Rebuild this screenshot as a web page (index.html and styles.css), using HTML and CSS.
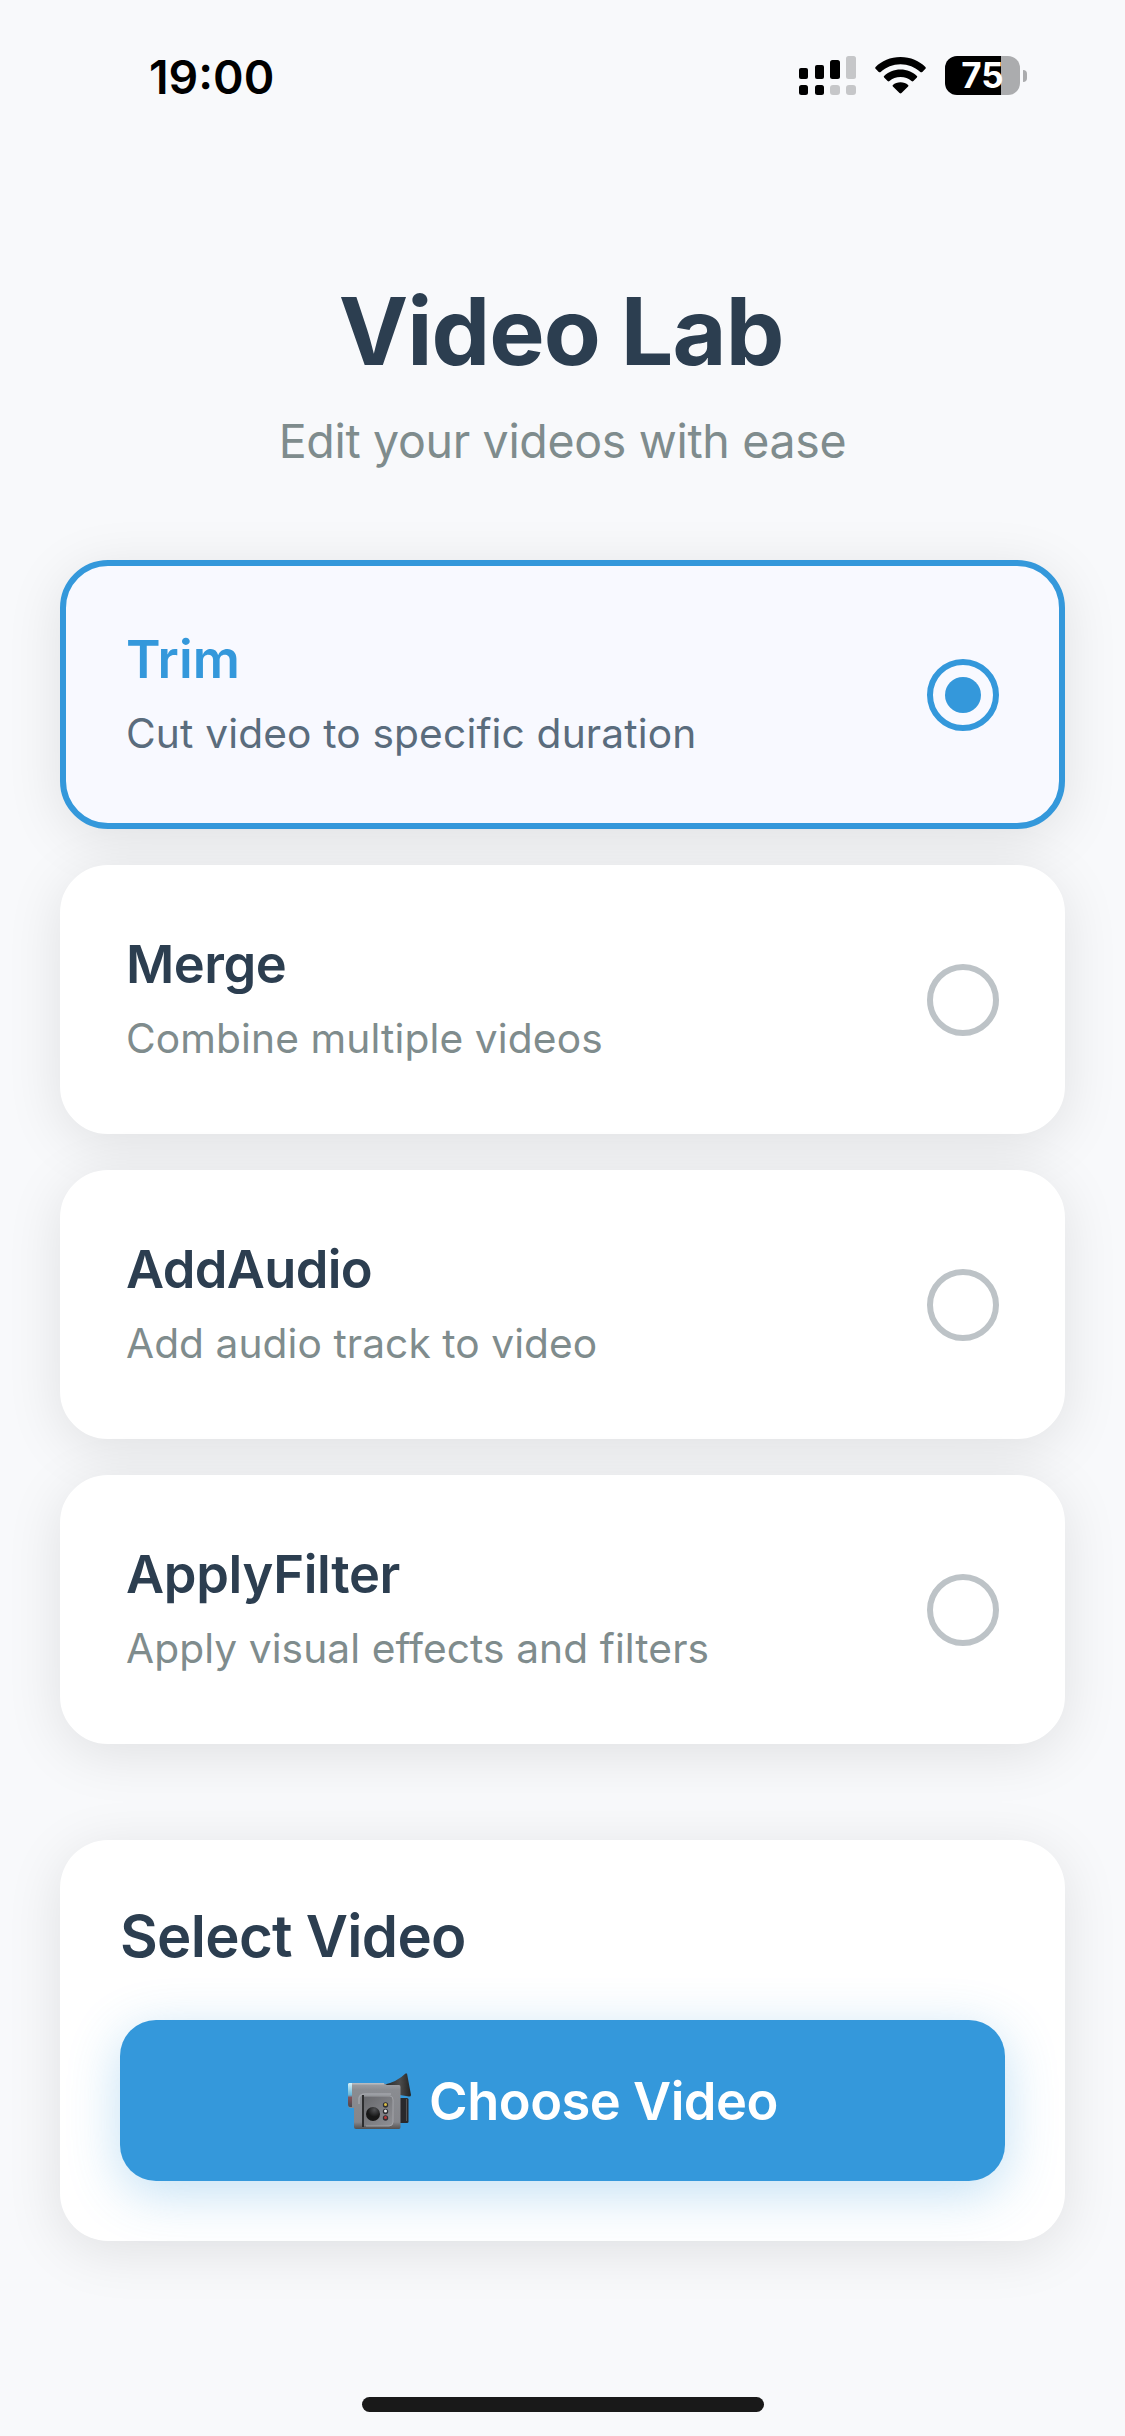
FILE: index.html
```html
<!DOCTYPE html>
<html lang="en">
<head>
<meta charset="utf-8">
<title>Video Lab</title>
<link rel="stylesheet" href="styles.css">
</head>
<body>
<header class="status-bar">
  <span class="clock">19:00</span>
  <div class="indicators">
    <svg class="signal" viewBox="0 0 57 39" width="57" height="39">
      <g fill="#000"><rect x="0" y="12" width="9" height="11" rx="2"/><rect x="16" y="9" width="9" height="14" rx="2"/><rect x="31" y="4" width="10" height="19" rx="2.5"/><rect x="0" y="29" width="9" height="10" rx="2.5"/><rect x="16" y="29" width="9" height="10" rx="2.5"/></g>
      <g fill="#c6c7c9"><rect x="47" y="0" width="10" height="23" rx="2.5"/><rect x="31" y="29" width="10" height="10" rx="3"/><rect x="47" y="29" width="10" height="10" rx="3"/></g>
    </svg>
    <svg class="wifi" viewBox="0 0 51 37" width="51" height="37">
      <path d="M25.500 0C35.500 0 44.500 4 50.400 10Q51.200 10.900 50.400 11.800L47.300 14.900Q46.300 15.800 45.300 14.900C40 10.200 33 7.300 25.500 7.300S11 10.200 5.700 14.900Q4.700 15.800 3.700 14.900L.6 11.800Q-.2 10.900.6 10C6.500 4 15.500 0 25.500 0Z"/>
      <path d="M25.500 12.500C32 12.500 37.700 15 41.900 18.900Q42.700 19.700 41.900 20.500L38.400 24Q37.500 24.900 36.500 24C33.600 21.400 29.800 19.900 25.500 19.900S17.400 21.400 14.500 24Q13.500 24.900 12.600 24L9.100 20.500Q8.300 19.700 9.100 18.900C13.300 15 19 12.500 25.500 12.500Z"/>
      <path d="M25.500 25.300C28.500 25.300 31.200 26.300 33.100 28Q33.900 28.700 33.100 29.500L26.500 36Q25.500 36.900 24.500 36L17.900 29.500Q17.100 28.700 17.900 28C19.800 26.300 22.500 25.300 25.500 25.300Z"/>
    </svg>
    <div class="battery"><div class="battery-body"><span class="battery-level">75</span></div><span class="battery-cap"></span></div>
  </div>
</header>
<main class="screen">
  <h1 class="title">Video Lab</h1>
  <p class="subtitle">Edit your videos with ease</p>
  <section class="options">
    <div class="option trim selected"><div class="option-text"><h2 class="option-name">Trim</h2><p class="option-desc">Cut video to specific duration</p></div><span class="radio"></span></div>
    <div class="option merge"><div class="option-text"><h2 class="option-name">Merge</h2><p class="option-desc">Combine multiple videos</p></div><span class="radio"></span></div>
    <div class="option add-audio"><div class="option-text"><h2 class="option-name">AddAudio</h2><p class="option-desc">Add audio track to video</p></div><span class="radio"></span></div>
    <div class="option apply-filter"><div class="option-text"><h2 class="option-name">ApplyFilter</h2><p class="option-desc">Apply visual effects and filters</p></div><span class="radio"></span></div>
  </section>
  <section class="picker">
    <h2 class="picker-title">Select Video</h2>
    <button class="choose" type="button">
      <svg class="camcorder" viewBox="0 0 64 58" width="64" height="58">
        <defs>
          <linearGradient id="shell" x1="0" y1="0" x2="0" y2="1"><stop offset="0" stop-color="#a0a2a7"/><stop offset=".15" stop-color="#8a8c91"/><stop offset=".85" stop-color="#85868b"/><stop offset="1" stop-color="#54504f"/></linearGradient>
          <linearGradient id="panel" x1="0" y1="0" x2="1" y2="1"><stop offset="0" stop-color="#66676b"/><stop offset="1" stop-color="#8f9095"/></linearGradient>
          <linearGradient id="cup" x1="0" y1="0" x2="1" y2="0"><stop offset="0" stop-color="#222"/><stop offset=".6" stop-color="#4c4c4c"/><stop offset="1" stop-color="#222"/></linearGradient>
          <linearGradient id="lens" x1="0" y1="0" x2="0" y2="1"><stop offset="0" stop-color="#d5f2fb"/><stop offset=".5" stop-color="#67b6d8"/><stop offset=".6" stop-color="#85535a"/><stop offset="1" stop-color="#494a50"/></linearGradient>
          <radialGradient id="dial" cx=".6" cy=".2"><stop offset="0" stop-color="#505154"/><stop offset="1" stop-color="#171717"/></radialGradient>
        </defs>
        <path d="M36 12Q50 9 58.500 .500L60 .500L64 22Q64 23.500 62 23.500L53 22V13Z" fill="url(#cup)"/>
        <rect x="52" y="25" width="9.500" height="25" rx="1.500" fill="#29292b"/><path d="M59.500 26V48" stroke="#555" stroke-width="1"/>
        <path d="M3 10H36L40 12H52Q53.500 12 53.500 14V54Q53.500 56 52 56H9Q7 56 7 54V35H3Q1 34 1 31V12Q1 10 3 10Z" fill="url(#shell)"/>
        <path d="M2 10H5V34H3Q1 34 1 31V11Z" fill="url(#lens)"/>
        <path d="M5 10.800H37" fill="none" stroke="#bfc1c5" stroke-width="1.200"/>
        <path d="M12 31V25Q13 21 18 21H44" fill="none" stroke="#a3a5aa" stroke-width="1.500"/>
        <path d="M16 53V23H43Q46 23 46 26V49Q46 53 42 53Z" fill="url(#panel)"/><path d="M16 22V54" stroke="#2c2d2f" stroke-width="2"/><path d="M17 23H43Q46 23 46 27V49Q46 53 42 53H19" fill="none" stroke="#aaabb0" stroke-width=".8"/>
        <circle cx="26" cy="41" r="7" fill="url(#dial)"/>
        <g fill="#303034"><circle cx="38.500" cy="32" r="2.700"/><circle cx="38.500" cy="38.500" r="2.700"/><circle cx="38.500" cy="45" r="2.700"/></g>
        <circle cx="38.500" cy="31.500" r="1.500" fill="#d8bd45"/><circle cx="38.500" cy="38" r="1.500" fill="#e5e5e7"/><circle cx="38.500" cy="44.500" r="1.500" fill="#b83a3a"/>
      </svg>
      <span class="choose-label">Choose Video</span>
    </button>
  </section>
</main>
<footer class="home-area"><span class="home-indicator"></span></footer>
</body>
</html>
```
FILE: styles.css
```css
* { box-sizing: border-box; }
body {
  margin: 0;
  width: 1125px;
  height: 2436px;
  overflow: hidden;
  display: flex;
  flex-direction: column;
  background: #f8f9fb;
  color: #2c3e50;
  font-family: Inter, "Noto Sans", sans-serif;
}
h1, h2, p { margin: 0; }
.status-bar {
  height: 132px;
  padding: 0 98px 0 149px;
  display: flex;
  justify-content: space-between;
  align-items: flex-start;
  color: #000;
}
.clock { margin-top: 49px; font-size: 46.4px; font-weight: 600; line-height: 56px; }
.indicators { display: flex; align-items: flex-start; padding-top: 56px; }
.wifi { margin: 1px 19px 0; }
.battery { display: flex; align-items: center; gap: 3px; }
.battery-body {
  width: 75px;
  height: 39px;
  border-radius: 12px;
  display: flex;
  align-items: center;
  justify-content: center;
  background: linear-gradient(90deg, #000 56px, #abacae 56px);
}
.battery-level { color: #fff; font-size: 35px; font-weight: 700; line-height: 39px; }
.battery-cap { width: 4px; height: 12px; border-radius: 0 5px 5px 0; background: #abacae; }
.screen { flex: 1; padding: 0 60px; }
.title { margin-top: 141px; padding-right: 3px; text-align: center; font-size: 93.1px; font-weight: 700; line-height: 116px; letter-spacing: -.96px; }
.subtitle { margin-top: 24px; text-align: center; font-size: 46.5px; line-height: 56px; letter-spacing: -.33px; color: #7f8c8d; }
.options { margin-top: 91px; display: flex; flex-direction: column; gap: 36px; }
.option {
  height: 269px;
  padding: 60px;
  border-radius: 48px;
  border: 6px solid #fff;
  display: flex;
  justify-content: space-between;
  align-items: center;
  background: #fff;
  box-shadow: 0 10px 56px rgba(0, 0, 0, .1);
}
.option.selected { border-color: #3498db; background: #f8f9ff; }
.option-text { height: 135px; }
.option-name { font-size: 52.4px; font-weight: 600; line-height: 65px; }
.option-desc { margin-top: 15px; font-size: 40.7px; line-height: 54px; color: #7f8c8d; }
.selected .option-name { color: #3498db; }
.selected .option-desc { color: #5a6c7d; }
.trim .option-desc { letter-spacing: .15px; }
.merge .option-name { letter-spacing: -.5px; }
.merge .option-desc { letter-spacing: .11px; }
.add-audio .option-name { letter-spacing: -.65px; }
.add-audio .option-desc { letter-spacing: .06px; }
.apply-filter .option-name { letter-spacing: -.3px; }
.apply-filter .option-desc { letter-spacing: .08px; }
.radio {
  width: 72px;
  height: 72px;
  border: 6px solid #bdc3c7;
  border-radius: 50%;
  display: grid;
  place-items: center;
}
.selected .radio { border-color: #3498db; }
.selected .radio::after { content: ""; width: 36px; height: 36px; border-radius: 50%; background: #3498db; }
.picker {
  margin-top: 96px;
  height: 401px;
  padding: 60px;
  border-radius: 48px;
  background: #fff;
  box-shadow: 0 10px 56px rgba(0, 0, 0, .1);
}
.picker-title { font-size: 58.1px; font-weight: 600; line-height: 72px; letter-spacing: -.7px; }
.choose {
  margin-top: 48px;
  width: 100%;
  height: 161px;
  padding: 0;
  border: 0;
  border-radius: 36px;
  display: flex;
  align-items: center;
  justify-content: center;
  gap: 18px;
  background: #3498db;
  box-shadow: 0 12px 52px rgba(52, 152, 219, .3);
  color: #fff;
  font-family: inherit;
  font-size: 52.4px;
  font-weight: 600;
  line-height: 64px;
  letter-spacing: -.5px;
}
.camcorder { margin-top: 2px; }
.home-area { height: 43px; display: flex; justify-content: center; }
.home-indicator { margin-top: 4px; width: 402px; height: 15px; border-radius: 8px; background: #191919; }
```
